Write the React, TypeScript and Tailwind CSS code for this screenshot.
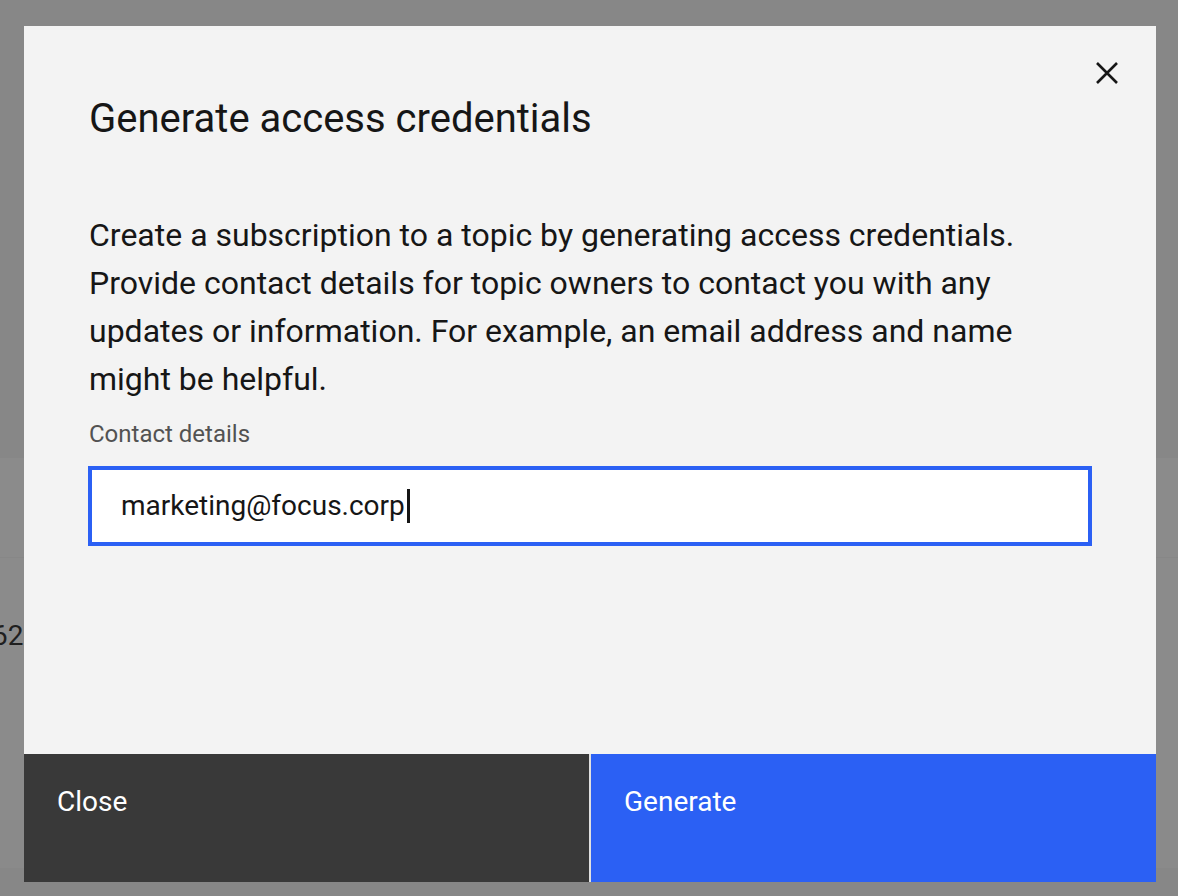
import React from "react";

export default function App() {
  return (
    <div
      className="relative w-[1178px] h-[896px] overflow-hidden bg-[#878787] text-[#161616]"
      style={{ fontFamily: "Roboto, 'Noto Sans', sans-serif" }}
    >
      {/* page behind the overlay */}
      <div className="flex flex-col">
        <div className="h-[458px]" />
        <div className="h-[100px] bg-[#8b8b8b] border-b border-[#878787]" />
        <div className="h-[262px] bg-[#8b8b8b] pt-[60px]">
          <span className="block -ml-[8px] text-[28px] leading-[36px] text-[#1f1f1f]">62</span>
        </div>
        <div className="h-[48px] bg-[#8a8a8a]" />
      </div>

      {/* modal */}
      <div className="absolute left-[24px] top-[26px] w-[1132px] h-[856px] bg-[#f3f3f3] flex flex-col">
        <button
          aria-label="Close"
          className="absolute top-[27px] right-[29px] w-[40px] h-[40px] flex items-center justify-center"
        >
          <svg width="22" height="22" viewBox="0 0 22 22" fill="none">
            <path d="M1 1L21 21M21 1L1 21" stroke="#161616" strokeWidth="2.6" />
          </svg>
        </button>

        <h2 className="mt-[65px] pl-[65px] text-[40px] leading-[56px] font-normal">
          Generate access credentials
        </h2>

        <p className="mt-[64px] pl-[65px] text-[32px] leading-[48px]">
          Create a subscription to a topic by generating access credentials.
          <br />
          Provide contact details for topic owners to contact you with any
          <br />
          updates or information. For example, an email address and name
          <br />
          might be helpful.
        </p>

        <div className="mt-[15px] pl-[65px] text-[24px] leading-[32px] text-[#525252]">
          Contact details
        </div>

        <div className="mt-[16px] ml-[64px] w-[1004px] h-[80px] border-[4px] border-[#2b60f4] bg-white flex items-center pl-[29px] text-[28px]">
          <span>marketing@focus.corp</span>
          <span className="inline-block w-[3px] h-[34px] bg-[#161616] ml-[2px]" />
        </div>

        <div className="mt-auto h-[128px] grid grid-cols-2 gap-[2px] bg-[#e0e0e0]">
          <button className="bg-[#393939] text-white text-[28px] leading-[36px] text-left pl-[33px] pt-[30px] flex items-start">
            Close
          </button>
          <button className="bg-[#2b60f4] text-white text-[28px] leading-[36px] text-left pl-[33px] pt-[30px] flex items-start">
            Generate
          </button>
        </div>
      </div>
    </div>
  );
}
